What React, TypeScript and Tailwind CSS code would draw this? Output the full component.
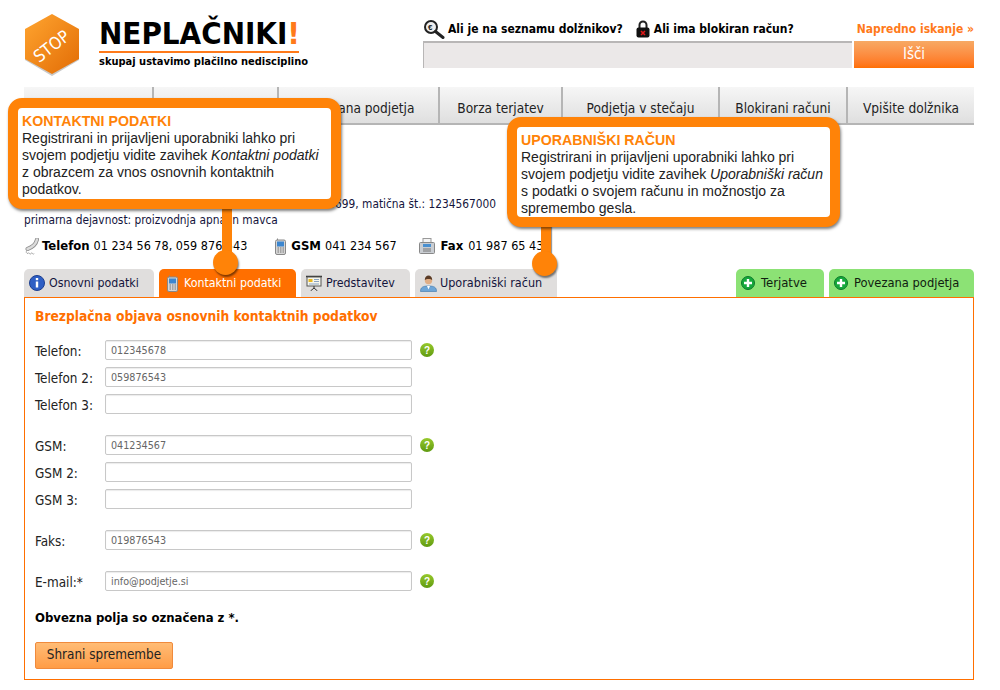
import type { ReactNode } from "react";

// prvi dve postavki sta v posnetku skriti pod oblačkom
const navItems = [
  { label: "", width: "w-[130px]" },
  { label: "", width: "w-[125px]" },
  { label: "Povezana podjetja", width: "w-[161px]" },
  { label: "Borza terjatev", width: "w-[123px]" },
  { label: "Podjetja v stečaju", width: "w-[157px]" },
  { label: "Blokirani računi", width: "w-[128px]" },
  { label: "Vpišite dolžnika", width: "w-[126px]" },
];

function LogoIcon() {
  return (
    <svg width="56" height="64" viewBox="0 0 56 64">
      <defs>
        <linearGradient id="hex" x1="0" y1="0" x2="1" y2="1">
          <stop offset="0" stopColor="#ffa530" />
          <stop offset="1" stopColor="#e26c05" />
        </linearGradient>
      </defs>
      <polygon points="28,1 55,16 55,46 28,62 1,46 1,16" fill="#c9c9c9" transform="translate(0,1)" />
      <polygon points="28,1 55,16 55,46 28,61 1,46 1,16" fill="url(#hex)" />
      <text
        x="28"
        y="39"
        fill="#fff"
        fontSize="17"
        textAnchor="middle"
        fontFamily="'DejaVu Sans Condensed', sans-serif"
        transform="rotate(-38 28 34)"
      >
        STOP
      </text>
    </svg>
  );
}

function SearchIcon() {
  return (
    <svg width="22" height="20" viewBox="0 0 22 20">
      <circle cx="8" cy="8" r="6" fill="#eee" stroke="#222" strokeWidth="2" />
      <path d="M12.5 12.5 20 18.5" stroke="#222" strokeWidth="3" strokeLinecap="round" />
      <text x="5" y="11" fontSize="8" fontWeight="700" fill="#222" fontFamily="'Liberation Sans', sans-serif">€</text>
    </svg>
  );
}

function LockIcon() {
  return (
    <svg width="14" height="18" viewBox="0 0 14 18">
      <path d="M3.5 8V5a3.5 3.5 0 0 1 7 0v3" fill="none" stroke="#222" strokeWidth="2" />
      <rect x="0.5" y="7.5" width="13" height="10" rx="2" fill="#111" />
      <path d="M5 11l4 4M9 11l-4 4" stroke="#e01818" strokeWidth="1.6" />
    </svg>
  );
}

function PhoneIcon() {
  return (
    <svg width="15" height="17" viewBox="0 0 15 17">
      <path d="M12 1.5C11 6 8 9 2.5 11" fill="none" stroke="#8e8e8e" strokeWidth="4" strokeLinecap="round" />
      <path d="M12 1.5C11 6 8 9 2.5 11" fill="none" stroke="#dcdcdc" strokeWidth="2.4" strokeLinecap="round" />
      <path d="M2 12.5c-1.5 1.5-.5 3 1 3 .5-1 1-1 1.5 0s1 1 1.5 0 1-1 1.5 0 1 1 1.5 0" fill="none" stroke="#a8a8a8" />
    </svg>
  );
}

function MobileIcon() {
  return (
    <svg width="11" height="17" viewBox="0 0 11 17">
      <path d="M2 0.5h1v2H2z" fill="#888" />
      <rect x="0.5" y="2" width="10" height="14.5" rx="1.5" fill="#d6d6d6" stroke="#888" />
      <rect x="2" y="3.5" width="7" height="5" fill="#3c86cf" />
      <path d="M2.5 10h1.5M5 10h1.5M7.5 10H9M2.5 12h1.5M5 12h1.5M7.5 12H9M2.5 14h1.5M5 14h1.5M7.5 14H9" stroke="#777" />
    </svg>
  );
}

function FaxIcon() {
  return (
    <svg width="16" height="16" viewBox="0 0 16 16">
      <rect x="4" y="0.5" width="8" height="5" fill="#f4f4f4" stroke="#999" />
      <rect x="0.5" y="4.5" width="15" height="11" rx="1" fill="#c9cdd2" stroke="#888" />
      <rect x="4" y="6" width="8" height="3" fill="#4a90d0" />
      <path d="M4 11h8M4 13h8" stroke="#777" />
    </svg>
  );
}

function InfoIcon() {
  return (
    <svg width="16" height="16" viewBox="0 0 16 16">
      <circle cx="8" cy="8" r="7.5" fill="#2f5fc4" stroke="#1d3f90" />
      <rect x="6.8" y="3" width="2.4" height="2.2" fill="#fff" />
      <rect x="6.8" y="6.5" width="2.4" height="6" fill="#fff" />
    </svg>
  );
}

function PresenterIcon() {
  return (
    <svg width="16" height="16" viewBox="0 0 16 16">
      <path d="M0 1.5h16" stroke="#333" strokeWidth="1.5" />
      <rect x="1" y="2" width="14" height="9" fill="#f6f6ec" stroke="#555" />
      <rect x="2.5" y="4" width="4" height="3" fill="#e8b820" />
      <path d="M8 4.5h5M8 6.5h5M3 9h10" stroke="#8aa2c0" />
      <path d="M8 11v2M8 13l-3.5 3M8 13l3.5 3" stroke="#333" />
    </svg>
  );
}

function UserIcon() {
  return (
    <svg width="17" height="17" viewBox="0 0 17 17">
      <path d="M0.5 16.5c0-4 2-5.5 8-5.5s8 1.5 8 5.5z" fill="#6ea6d8" stroke="#4a7fb0" strokeWidth="0.7" />
      <path d="M7 11l1.5 3.5L10 11z" fill="#fff" />
      <circle cx="8.5" cy="5.5" r="3.7" fill="#e0ae86" />
      <path d="M4.8 5c0-3 1.7-4.5 3.7-4.5S12.2 2 12.2 5C11 3.5 6 3.5 4.8 5z" fill="#5a3b26" />
    </svg>
  );
}

function PlusIcon() {
  return (
    <svg width="14" height="14" viewBox="0 0 14 14">
      <circle cx="7" cy="7" r="6.5" fill="#16a83c" stroke="#0d7a2a" />
      <path d="M7 3v8M3 7h8" stroke="#fff" strokeWidth="2.4" />
    </svg>
  );
}

function HelpIcon() {
  return (
    <svg width="14" height="14" viewBox="0 0 14 14">
      <defs>
        <linearGradient id="help" x1="0" y1="0" x2="0" y2="1">
          <stop offset="0" stopColor="#97c92c" />
          <stop offset="1" stopColor="#5f9a10" />
        </linearGradient>
      </defs>
      <circle cx="7" cy="7" r="7" fill="url(#help)" />
      <text x="7" y="11" fill="#fff" fontSize="10" fontWeight="700" textAnchor="middle" fontFamily="'Liberation Sans', sans-serif">?</text>
    </svg>
  );
}

function Callout({ className, title, children }: { className: string; title: string; children: ReactNode }) {
  return (
    <div className={`absolute w-[333px] rounded-[14px] border-[10px] border-[#ff8308] bg-white px-[4px] pt-[5px] font-['Liberation_Sans',sans-serif] text-[14px] leading-[17px] text-[#222] shadow-[1px_2px_3px_rgba(0,0,0,0.5)] ${className}`}>
      <div className="text-[14.2px] font-bold text-[#ff8308]">{title}</div>
      {children}
    </div>
  );
}

function Tab({ icon, label, className }: { icon: ReactNode; label: string; className: string }) {
  return (
    <div className={`flex h-[28px] items-center rounded-t-[5px] pl-[5px] ${className}`}>
      {icon}
      <span>{label}</span>
    </div>
  );
}

function Field({ label, value, help, className = "" }: { label: string; value?: string; help?: boolean; className?: string }) {
  return (
    <div className={`flex h-[20px] items-center ${className}`}>
      <label className="w-[70px] pt-[4px] text-[13.4px] text-[#222]">{label}</label>
      <input
        readOnly
        defaultValue={value}
        className="h-[20px] w-[307px] rounded-[2px] border border-[#c8c8c8] bg-white px-[5px] text-[10.7px] text-[#666] shadow-[inset_0_1px_1px_rgba(0,0,0,0.08)]"
      />
      {help && (
        <span className="ml-[8px] flex">
          <HelpIcon />
        </span>
      )}
    </div>
  );
}

export default function App() {
  return (
    <div className="relative h-[690px] w-[1000px] overflow-hidden bg-white pr-[26px] pl-[24px] font-['DejaVu_Sans_Condensed','DejaVu_Sans',sans-serif] text-black">
      {/* glava */}
      <header className="flex h-[87px]">
        <div className="mt-[13px] w-[75px]">
          <LogoIcon />
        </div>
        <div className="mt-[16px] w-[324px]">
          <div className="w-[200px] border-b-2 border-[#ff7a1a] pb-[1px] text-[31px] leading-[34px] font-bold">
            NEPLAČNIKI<span className="text-[#ff7a1a]">!</span>
          </div>
          <div className="mt-[2px] text-[11px] leading-[14px] font-bold">skupaj ustavimo plačilno nedisciplino</div>
        </div>
        <div className="mt-[17px] w-[551px]">
          <div className="flex h-[24px] items-center text-[12px] font-bold">
            <SearchIcon />
            <span className="ml-[3px]">Ali je na seznamu dolžnikov?</span>
            <span className="ml-[13px] flex"><LockIcon /></span>
            <span className="ml-[4px]">Ali ima blokiran račun?</span>
            <span className="ml-auto text-[#ff7a1a]">Napredno iskanje »</span>
          </div>
          <div className="flex gap-[2px]">
            <input readOnly className="h-[27px] w-[429px] border-t-2 border-l border-[#b8b6b6] bg-[#ebe8e8]" />
            <button className="h-[27px] w-[120px] bg-gradient-to-b from-[#f7a964] to-[#ff6f00] text-[15px] text-white">Išči</button>
          </div>
        </div>
      </header>

      {/* glavni meni */}
      <nav className="flex h-[38px] border-b-2 border-[#b5b5b5] bg-gradient-to-b from-[#f6f6f6] to-[#dfdfdf]">
        {navItems.map((item, i) => (
          <div
            key={i}
            className={`flex items-center justify-center pt-[6px] text-[13.6px] text-[#222] ${item.width} ${i < navItems.length - 1 ? "border-r-2 border-[#b5b5b5]" : ""}`}
          >
            {item.label}
          </div>
        ))}
      </nav>

      {/* podatki o podjetju */}
      <div className="mt-[71px] w-[472px] text-right text-[11.8px] leading-[16px] text-[#14143c]">
        davčna št.: 12345699, matična št.: 1234567000
      </div>
      <div className="text-[11.8px] leading-[16px] text-[#14143c]">primarna dejavnost: proizvodnja apna in mavca</div>
      <div className="mt-[9px] flex h-[18px] items-center text-[12.5px]">
        <span className="ml-[1px] flex"><PhoneIcon /></span>
        <b className="ml-[2px] text-[13px]">Telefon</b>
        <span className="ml-[4px]">01 234 56 78, 059 876 543</span>
        <span className="ml-[28px] flex"><MobileIcon /></span>
        <b className="ml-[5px] text-[13px]">GSM</b>
        <span className="ml-[4px]">041 234 567</span>
        <span className="ml-[22px] flex"><FaxIcon /></span>
        <b className="ml-[6px] text-[13px]">Fax</b>
        <span className="ml-[5px]">01 987 65 43</span>
      </div>

      {/* zavihki */}
      <div className="mt-[14px] flex">
        <Tab icon={<InfoIcon />} label="Osnovni podatki" className="w-[130px] gap-[4px] bg-[#e0dedd] text-[12.3px] text-[#14143c]" />
        <Tab icon={<MobileIcon />} label="Kontaktni podatki" className="ml-[5px] w-[137px] gap-[6px] bg-[#ff6f00] pl-[8px] text-[12.3px] text-white" />
        <Tab icon={<PresenterIcon />} label="Predstavitev" className="ml-[5px] w-[109px] gap-[4px] bg-[#e0dedd] text-[12.3px] text-[#14143c]" />
        <Tab icon={<UserIcon />} label="Uporabniški račun" className="ml-[5px] w-[142px] gap-[3px] bg-[#e0dedd] text-[12.5px] text-[#14143c]" />
        <Tab icon={<PlusIcon />} label="Terjatve" className="ml-auto w-[88px] gap-[6px] bg-[#8ce275] text-[13px] text-[#102010]" />
        <Tab icon={<PlusIcon />} label="Povezana podjetja" className="ml-[5px] w-[145px] gap-[6px] bg-[#8ce275] text-[12.8px] text-[#102010]" />
      </div>

      {/* obrazec */}
      <section className="h-[383px] border border-[#ff6f00] px-[10px]">
        <h2 className="mt-[9px] text-[13.7px] leading-[18px] font-bold text-[#ff6f00]">Brezplačna objava osnovnih kontaktnih podatkov</h2>
        <div className="mt-[15px] flex flex-col gap-[7px]">
          <Field label="Telefon:" value="012345678" help />
          <Field label="Telefon 2:" value="059876543" />
          <Field label="Telefon 3:" />
          <Field label="GSM:" value="041234567" help className="mt-[14px]" />
          <Field label="GSM 2:" />
          <Field label="GSM 3:" />
          <Field label="Faks:" value="019876543" help className="mt-[14px]" />
          <Field label="E-mail:*" value="info@podjetje.si" help className="mt-[14px]" />
        </div>
        <p className="mt-[18px] text-[13px] leading-[18px] font-bold">Obvezna polja so označena z *.</p>
        <button className="mt-[15px] h-[27px] w-[138px] rounded-[2px] border border-[#f08a3c] bg-gradient-to-b from-[#ffbc75] to-[#ff9c45] text-[13.4px] text-[#222]">
          Shrani spremembe
        </button>
      </section>

      {/* oblački z razlago */}
      <div className="absolute top-[205px] left-[222px] h-[49px] w-[10px] bg-[#ff8308]" />
      <div className="absolute top-[250px] left-[213px] size-[25px] rounded-full bg-[#ff8308] shadow-[1px_2px_2px_rgba(0,0,0,0.5)]" />
      <div className="absolute top-[224px] left-[541px] h-[30px] w-[10px] bg-[#ff8308] shadow-[1px_0_1px_rgba(0,0,0,0.4)]" />
      <div className="absolute top-[251px] left-[532px] size-[25px] rounded-full bg-[#ff8308] shadow-[1px_2px_2px_rgba(0,0,0,0.5)]" />
      <Callout className="top-[98px] left-[8px] pb-[1px]" title="KONTAKTNI PODATKI">
        Registrirani in prijavljeni uporabniki lahko pri
        <br />
        svojem podjetju vidite zavihek <i>Kontaktni podatki</i>
        <br />z obrazcem za vnos osnovnih kontaktnih
        <br />podatkov.
      </Callout>
      <Callout className="top-[117px] left-[507px]" title="UPORABNIŠKI RAČUN">
        Registrirani in prijavljeni uporabniki lahko pri
        <br />
        svojem podjetju vidite zavihek <i>Uporabniški račun</i>
        <br />s podatki o svojem računu in možnostjo za
        <br />spremembo gesla.
      </Callout>
    </div>
  );
}
